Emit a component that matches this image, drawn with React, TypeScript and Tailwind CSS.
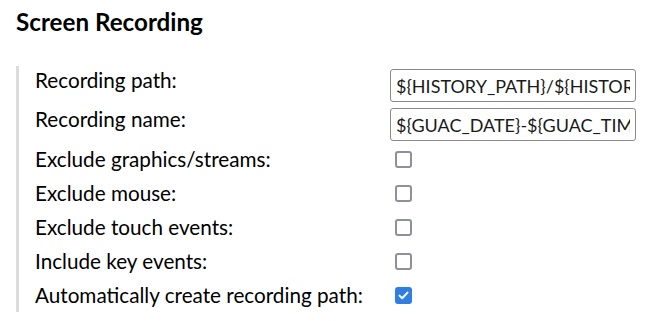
import React from "react";

const textRows = [
  { label: "Recording path:", value: "${HISTORY_PATH}/${HISTORY_UUID}" },
  { label: "Recording name:", value: "${GUAC_DATE}-${GUAC_TIME}" },
];

const checkRows = [
  { label: "Exclude graphics/streams:", checked: false },
  { label: "Exclude mouse:", checked: false },
  { label: "Exclude touch events:", checked: false },
  { label: "Include key events:", checked: false },
  { label: "Automatically create recording path:", checked: true },
];

const Checkbox = ({ checked }: { checked: boolean }) =>
  checked ? (
    <span className="ml-[5px] flex h-[17px] w-[17px] items-center justify-center rounded-[3px] bg-[#2f7ee0]">
      <svg width="11" height="9" viewBox="0 0 11 9" fill="none">
        <path d="M1.5 4.6L4.2 7.2L9.5 1.6" stroke="white" strokeWidth="2" strokeLinecap="round" strokeLinejoin="round" />
      </svg>
    </span>
  ) : (
    <span className="ml-[5px] block h-[17px] w-[17px] rounded-[3px] border-2 border-[#8f8f9d] bg-white" />
  );

export default function App() {
  return (
    <div className="h-[321px] w-[661px] bg-white font-['Lato',sans-serif] text-black">
      <h2 className="pl-4 pt-[7px] text-[24.2px] font-bold leading-[29px]">Screen Recording</h2>

      <div className="ml-4 mt-[30px] flex flex-col border-l-[3px] border-[#dcdcdc] pl-4 pt-[3px] text-[20.7px] leading-[24px]">
        {textRows.map((r, i) => (
          <div key={r.label} className={`grid h-[33px] grid-cols-[355px_246px] items-start ${i === 1 ? "mt-[6px]" : ""}`}>
            <span className="-mt-px">{r.label}</span>
            <input
              readOnly
              value={r.value}
              className="h-[33px] w-[246px] rounded-[3px] border border-[#8a8a8a] bg-white px-[5px] font-['Lato',sans-serif] text-[18px] text-[#1a1a1a] outline-none"
            />
          </div>
        ))}

        <div className="mt-px flex flex-col">
          {checkRows.map((r) => (
            <div key={r.label} className="grid h-[34px] grid-cols-[355px_246px] items-center">
              <span>{r.label}</span>
              <Checkbox checked={r.checked} />
            </div>
          ))}
        </div>
      </div>
    </div>
  );
}
